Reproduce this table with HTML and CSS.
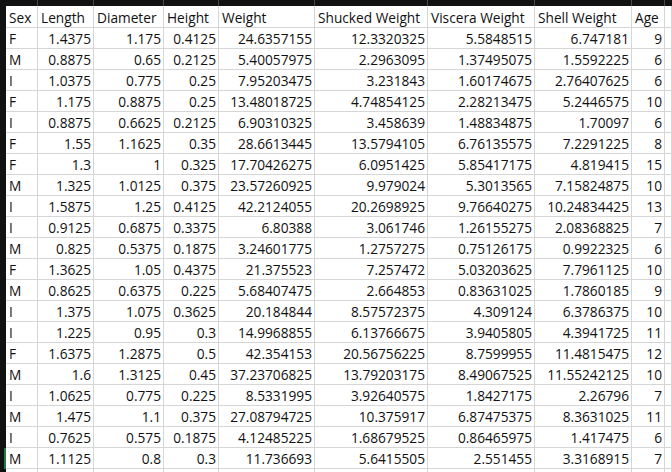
FILE: index.html
```html
<!DOCTYPE html>
<html>
<head>
<meta charset="utf-8">
<link rel="stylesheet" href="styles.css">
</head>
<body>
<div class="sheet">
  <div class="rh top"></div><div class="ch"></div><div class="ch"></div><div class="ch"></div><div class="ch"></div><div class="ch"></div><div class="ch"></div><div class="ch"></div><div class="ch"></div><div class="ch"></div><div class="ch last"></div>

  <div class="rh"></div><div class="c hd">Sex</div><div class="c hd">Length</div><div class="c hd">Diameter</div><div class="c hd">Height</div><div class="c hd">Weight</div><div class="c hd">Shucked Weight</div><div class="c hd">Viscera Weight</div><div class="c hd">Shell Weight</div><div class="c hd">Age</div><div class="c hd"></div>

  <div class="rh"></div><div class="c">F</div><div class="c n">1.4375</div><div class="c n">1.175</div><div class="c n">0.4125</div><div class="c n">24.6357155</div><div class="c n">12.3320325</div><div class="c n">5.5848515</div><div class="c n">6.747181</div><div class="c n">9</div><div class="c"></div>
  <div class="rh"></div><div class="c">M</div><div class="c n">0.8875</div><div class="c n">0.65</div><div class="c n">0.2125</div><div class="c n">5.40057975</div><div class="c n">2.2963095</div><div class="c n">1.37495075</div><div class="c n">1.5592225</div><div class="c n">6</div><div class="c"></div>
  <div class="rh"></div><div class="c">I</div><div class="c n">1.0375</div><div class="c n">0.775</div><div class="c n">0.25</div><div class="c n">7.95203475</div><div class="c n">3.231843</div><div class="c n">1.60174675</div><div class="c n">2.76407625</div><div class="c n">6</div><div class="c"></div>
  <div class="rh"></div><div class="c">F</div><div class="c n">1.175</div><div class="c n">0.8875</div><div class="c n">0.25</div><div class="c n">13.48018725</div><div class="c n">4.74854125</div><div class="c n">2.28213475</div><div class="c n">5.2446575</div><div class="c n">10</div><div class="c"></div>
  <div class="rh"></div><div class="c">I</div><div class="c n">0.8875</div><div class="c n">0.6625</div><div class="c n">0.2125</div><div class="c n">6.90310325</div><div class="c n">3.458639</div><div class="c n">1.48834875</div><div class="c n">1.70097</div><div class="c n">6</div><div class="c"></div>
  <div class="rh"></div><div class="c">F</div><div class="c n">1.55</div><div class="c n">1.1625</div><div class="c n">0.35</div><div class="c n">28.6613445</div><div class="c n">13.5794105</div><div class="c n">6.76135575</div><div class="c n">7.2291225</div><div class="c n">8</div><div class="c"></div>
  <div class="rh"></div><div class="c">F</div><div class="c n">1.3</div><div class="c n">1</div><div class="c n">0.325</div><div class="c n">17.70426275</div><div class="c n">6.0951425</div><div class="c n">5.85417175</div><div class="c n">4.819415</div><div class="c n">15</div><div class="c"></div>
  <div class="rh"></div><div class="c">M</div><div class="c n">1.325</div><div class="c n">1.0125</div><div class="c n">0.375</div><div class="c n">23.57260925</div><div class="c n">9.979024</div><div class="c n">5.3013565</div><div class="c n">7.15824875</div><div class="c n">10</div><div class="c"></div>
  <div class="rh"></div><div class="c">I</div><div class="c n">1.5875</div><div class="c n">1.25</div><div class="c n">0.4125</div><div class="c n">42.2124055</div><div class="c n">20.2698925</div><div class="c n">9.76640275</div><div class="c n">10.24834425</div><div class="c n">13</div><div class="c"></div>
  <div class="rh"></div><div class="c">I</div><div class="c n">0.9125</div><div class="c n">0.6875</div><div class="c n">0.3375</div><div class="c n">6.80388</div><div class="c n">3.061746</div><div class="c n">1.26155275</div><div class="c n">2.08368825</div><div class="c n">7</div><div class="c"></div>
  <div class="rh"></div><div class="c">M</div><div class="c n">0.825</div><div class="c n">0.5375</div><div class="c n">0.1875</div><div class="c n">3.24601775</div><div class="c n">1.2757275</div><div class="c n">0.75126175</div><div class="c n">0.9922325</div><div class="c n">6</div><div class="c"></div>
  <div class="rh"></div><div class="c">F</div><div class="c n">1.3625</div><div class="c n">1.05</div><div class="c n">0.4375</div><div class="c n">21.375523</div><div class="c n">7.257472</div><div class="c n">5.03203625</div><div class="c n">7.7961125</div><div class="c n">10</div><div class="c"></div>
  <div class="rh"></div><div class="c">M</div><div class="c n">0.8625</div><div class="c n">0.6375</div><div class="c n">0.225</div><div class="c n">5.68407475</div><div class="c n">2.664853</div><div class="c n">0.83631025</div><div class="c n">1.7860185</div><div class="c n">9</div><div class="c"></div>
  <div class="rh"></div><div class="c">I</div><div class="c n">1.375</div><div class="c n">1.075</div><div class="c n">0.3625</div><div class="c n">20.184844</div><div class="c n">8.57572375</div><div class="c n">4.309124</div><div class="c n">6.3786375</div><div class="c n">10</div><div class="c"></div>
  <div class="rh"></div><div class="c">I</div><div class="c n">1.225</div><div class="c n">0.95</div><div class="c n">0.3</div><div class="c n">14.9968855</div><div class="c n">6.13766675</div><div class="c n">3.9405805</div><div class="c n">4.3941725</div><div class="c n">11</div><div class="c"></div>
  <div class="rh"></div><div class="c">F</div><div class="c n">1.6375</div><div class="c n">1.2875</div><div class="c n">0.5</div><div class="c n">42.354153</div><div class="c n">20.56756225</div><div class="c n">8.7599955</div><div class="c n">11.4815475</div><div class="c n">12</div><div class="c"></div>
  <div class="rh"></div><div class="c">M</div><div class="c n">1.6</div><div class="c n">1.3125</div><div class="c n">0.45</div><div class="c n">37.23706825</div><div class="c n">13.79203175</div><div class="c n">8.49067525</div><div class="c n">11.55242125</div><div class="c n">10</div><div class="c"></div>
  <div class="rh"></div><div class="c">I</div><div class="c n">1.0625</div><div class="c n">0.775</div><div class="c n">0.225</div><div class="c n">8.5331995</div><div class="c n">3.92640575</div><div class="c n">1.8427175</div><div class="c n">2.26796</div><div class="c n">7</div><div class="c"></div>
  <div class="rh"></div><div class="c">M</div><div class="c n">1.475</div><div class="c n">1.1</div><div class="c n">0.375</div><div class="c n">27.08794725</div><div class="c n">10.375917</div><div class="c n">6.87475375</div><div class="c n">8.3631025</div><div class="c n">11</div><div class="c"></div>
  <div class="rh"></div><div class="c">I</div><div class="c n">0.7625</div><div class="c n">0.575</div><div class="c n">0.1875</div><div class="c n">4.12485225</div><div class="c n">1.68679525</div><div class="c n">0.86465975</div><div class="c n">1.417475</div><div class="c n">6</div><div class="c"></div>
  <div class="rh sel"></div><div class="c">M</div><div class="c n">1.1125</div><div class="c n">0.8</div><div class="c n">0.3</div><div class="c n">11.736693</div><div class="c n">5.6415505</div><div class="c n">2.551455</div><div class="c n">3.3168915</div><div class="c n">7</div><div class="c"></div>

  <div class="rh"></div><div class="c"></div><div class="c"></div><div class="c"></div><div class="c"></div><div class="c"></div><div class="c"></div><div class="c"></div><div class="c"></div><div class="c"></div><div class="c"></div>
</div>
</body>
</html>
```

FILE: styles.css
```css
html, body {
  margin: 0;
  padding: 0;
  background: #ffffff;
  overflow: hidden;
}

.sheet {
  display: grid;
  grid-template-columns: 6px 32px 56px 70px 55px 96px 113px 107px 97px 33px 1fr;
  grid-template-rows: 6px 22px;
  grid-auto-rows: 21px;
  width: 672px;
  height: 472px;
  overflow: hidden;
  font-family: "Open Sans", "Liberation Sans", sans-serif;
  font-size: 13.7px;
  color: #111111;
}

.rh {
  background: #111111;
}

.rh.sel {
  box-shadow: inset -2px 0 0 #1f7a45;
}

.ch {
  background: #111111;
  border-right: 1px solid #4a4a4a;
}

.ch.last {
  border-right: none;
}

.c {
  box-sizing: border-box;
  border-right: 1px solid #d6d6d6;
  border-bottom: 1px solid #d6d6d6;
  padding: 1px 2px 0 3px;
  line-height: 19px;
  white-space: nowrap;
  overflow: hidden;
}

.c.hd {
  padding-top: 2px;
}

.c.n {
  text-align: right;
}
```
